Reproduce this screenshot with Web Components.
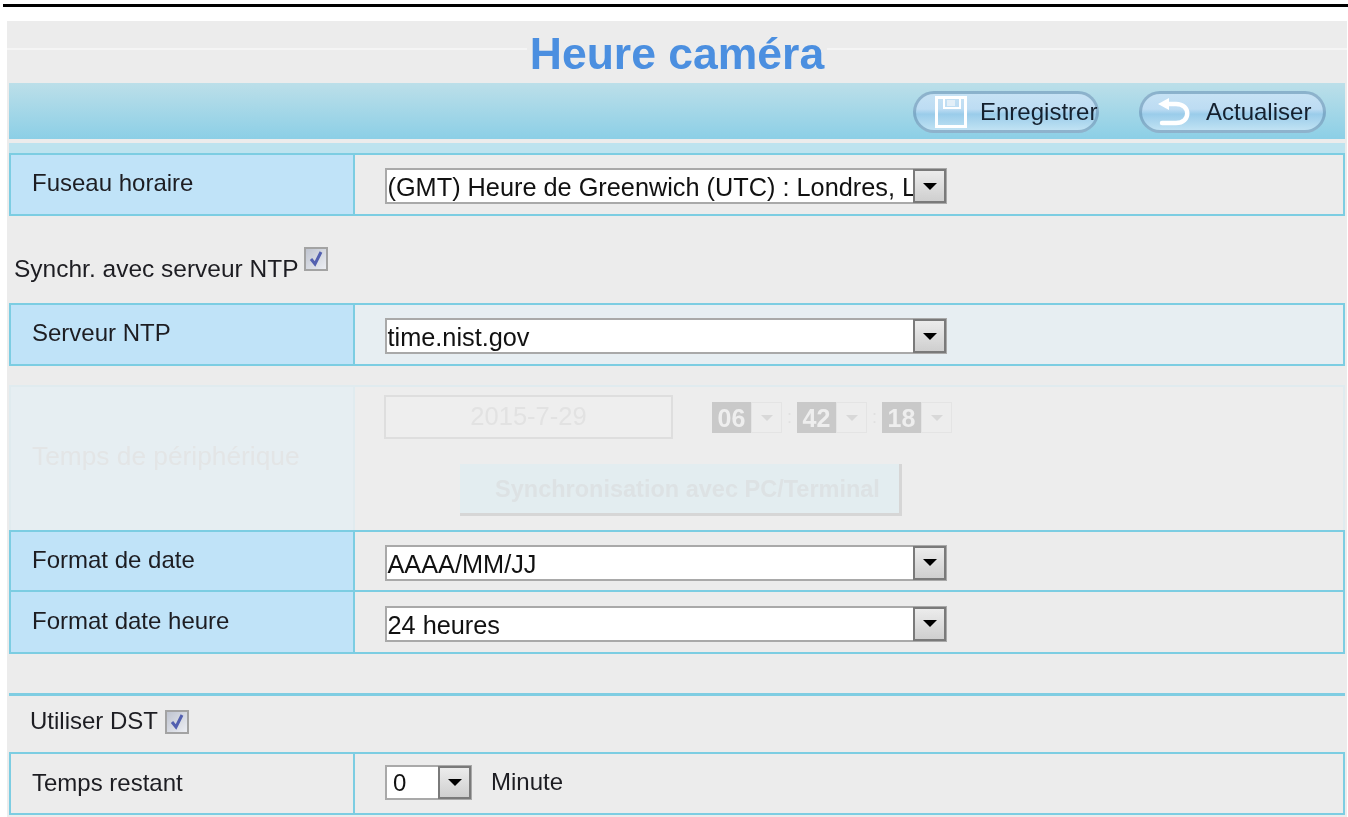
<!DOCTYPE html>
<html lang="fr"><head><meta charset="utf-8"><title>Heure caméra</title>
<style>
html,body{margin:0;padding:0;background:#fff;overflow:hidden;height:817px}
body{font-family:"Liberation Sans",Arial,sans-serif;color:#1d1d22}
</style></head><body>
<cam-page>
  <cam-title slot="head">Heure caméra</cam-title>
  <cam-toolbar slot="head">
    <cam-btn icon="save">Enregistrer</cam-btn>
    <cam-btn icon="back">Actualiser</cam-btn>
  </cam-toolbar>
  <cam-row label="Fuseau horaire" style="height:63px"><cam-select width="562">(GMT) Heure de Greenwich (UTC) : Londres, Lisbonne</cam-select></cam-row>
  <cam-check-line style="height:87px;padding:39px 0 0 5px;font-size:24.5px">Synchr. avec serveur NTP<cam-check style="margin:-8px 0 0 5px"></cam-check></cam-check-line>
  <cam-row label="Serveur NTP" tint style="height:63px"><cam-select width="562">time.nist.gov</cam-select></cam-row>
  <cam-time-row style="margin-top:19px"></cam-time-row>
  <cam-row label="Format de date" style="height:62px"><cam-select width="562">AAAA/MM/JJ</cam-select></cam-row>
  <cam-row label="Format date heure" style="height:62px;border-top:0"><cam-select width="562">24 heures</cam-select></cam-row>
  <cam-check-line style="margin-top:39px;border-top:3px solid #7fcde2;height:59px;padding:11px 0 0 21px;font-size:24px">Utiliser DST<cam-check style="margin:3px 0 0 7px"></cam-check></cam-check-line>
  <cam-row label="Temps restant" small style="height:63px"><cam-select width="87" small>0</cam-select><span style="margin-left:19px;font-size:24px;margin-top:-2px">Minute</span></cam-row>
</cam-page>
<script>
const def=(name,css,html)=>customElements.define(name,class extends HTMLElement{
  connectedCallback(){ if(this.shadowRoot) return;
    const r=this.attachShadow({mode:'open'});
    r.innerHTML='<style>'+css+'</style>'+(typeof html==='function'?html(this):html);
  }
});
def('cam-page',`
  :host{display:block}
  .bar{height:3px;background:#000;margin:4px 0 0 3px}
  .panel{margin:14px 1px 0 7px;background:#ececec;padding:0 2px;height:796px;box-sizing:border-box;filter:blur(.45px)}
`,`<div class="bar"></div><div class="panel"><slot name="head"></slot><slot></slot></div>`);
def('cam-title',`
  :host{display:flex;justify-content:center;height:62px;margin:0 -2px;
    background:linear-gradient(#f5f5f5,#f5f5f5) 0 27px/100% 2px no-repeat;
    font-size:44.5px;font-weight:700;color:#4b8fe0}
  span{background:#ececec;padding:0 3px;height:50px;margin-top:8px;line-height:50px}
`,`<span><slot></slot></span>`);
def('cam-toolbar',`
  :host{display:flex;justify-content:flex-end;gap:40px;box-sizing:border-box;height:56px;padding:8px 19px 0 0;
    background:linear-gradient(#bcdfe9,#8ccfe6);margin-bottom:14px;position:relative}
  :host::after{content:"";position:absolute;left:0;right:0;top:60px;height:10px;background:#bde3ef}
`,`<slot></slot>`);
def('cam-btn',`
  :host{display:flex;align-items:center;box-sizing:border-box;width:186px;height:42px;border-radius:21px;
    border:3px solid rgba(96,140,172,.55);background:linear-gradient(#c6e2f4 0,#bddcf3 42%,#9accea 56%,#c0e2f3 100%);
    font-size:24px;color:#14202e;white-space:nowrap}
  :host([icon=save]){padding-left:19px;--mr:13px}
  :host([icon=back]){width:187px;padding-left:16px;--mr:16px}
  svg{flex:none;margin-right:var(--mr)}
`,el=>el.getAttribute('icon')==='save'
 ?`<svg width="32" height="32" viewBox="0 0 32 32"><path d="M1.5 1.5H30.5V30.5H1.5Z" fill="none" stroke="#fff" stroke-width="3"/><path d="M9 1.5V12H25V1.5" fill="none" stroke="#fff" stroke-width="2"/><rect x="12" y="4" width="8" height="6" fill="#e3eff8"/></svg><slot></slot>`
 :`<svg width="32" height="30" viewBox="0 0 32 30"><path d="M10 7H18C33 7 33 26 18 26H4" fill="none" stroke="#fff" stroke-width="4.5" stroke-linecap="round"/><path d="M0 7L11 1V13Z" fill="#fff"/></svg><slot></slot>`);
def('cam-row',`
  :host{display:grid;grid-template-columns:344px 1fr;box-sizing:border-box;border:2px solid #7ccde2;font-size:24px}
  .l{background:#c0e3f8;border-right:2px solid #7ccde2;display:flex;align-items:center;padding:0 0 3px 21px;box-sizing:border-box}
  :host([small]) .l{background:#ececec;padding-bottom:1px}
  :host([tint]){background:#e7eef2}
  .c{display:flex;align-items:center;padding:3px 0 0 30px}
  :host([small]) .c{padding:0 0 2px 30px}
`,el=>`<div class="l">${el.getAttribute('label')}</div><div class="c"><slot></slot></div>`);
def('cam-select',`
  :host{display:flex;box-sizing:border-box;height:36px;background:#fff;border:2px solid #a9a9a9;font-size:25.3px;color:#111}
  .t{flex:1;min-width:0;overflow:hidden;white-space:nowrap;padding:0 0 0 .5px;line-height:34px}
  :host([small]){height:35px}
  :host([small]) .t{font-size:24px;padding-left:6px;line-height:31px}
  .b{width:33px;flex:none;box-sizing:border-box;border:2px solid #7a7a7a;background:linear-gradient(#ececec,#cfcfcf);display:flex;align-items:center;justify-content:center;margin:-1px -1px -1px 0}
  i{width:0;height:0;border:7px solid transparent;border-top:7px solid #000;border-bottom:0}
`,el=>{el.style.width=el.getAttribute('width')+'px';return `<div class="t"><slot></slot></div><div class="b"><i></i></div>`});
def('cam-check-line',`:host{display:block;box-sizing:border-box;line-height:28px}
 div{display:flex;align-items:flex-start}`,`<div><slot></slot></div>`);
def('cam-check',`
  :host{display:inline-block;width:24px;height:24px;box-sizing:border-box;border:2px solid #a3a3a3;background:linear-gradient(135deg,#bfc4d0,#eceef3)}
  svg{display:block}
`,`<svg width="20" height="20" viewBox="0 0 20 20"><path d="M5 10L9 15L15 3" fill="none" stroke="#5360b0" stroke-width="3"/></svg>`);
def('cam-time-row',`
  :host{display:grid;grid-template-columns:344px 1fr;box-sizing:border-box;height:145px;border:2px solid #e0ebef;border-bottom:0;color:#e3e5e6}
  .l{background:#e6eef2;border-right:2px solid #e0ebef;font-size:26.3px;display:flex;align-items:center;padding:0 0 4px 21px}
  .c{background:#ededed;padding:8px 0 0 29px}
  .top{display:flex;align-items:flex-start}
  .date{width:289px;height:44px;box-sizing:border-box;border:2px solid #dedede;font-size:25.5px;text-align:center;line-height:38px;background:#eeeeee;color:#e2e2e2}
  .tm{display:flex;align-items:center;margin:7px 0 0 39px;color:#e0e0e0;font-size:18px}
  .s{display:flex;height:31px;width:70px;box-sizing:border-box}
  .v{width:39px;background:#c9c9c9;color:#eee;font-weight:700;font-size:25px;line-height:32px;text-align:center}
  .a{flex:1;border:1px solid #e4e4e4;display:flex;align-items:center;justify-content:center}
  .a i{width:0;height:0;border:6px solid transparent;border-top:6px solid #d8d8d8;border-bottom:0}
  .sep{width:15px;text-align:center}
  .btn{margin:25px 0 0 76px;width:442px;height:52px;box-sizing:border-box;padding-left:16px;background:#e3edf0;border-right:3px solid #d6d6d6;border-bottom:3px solid #d6d6d6;text-align:center;color:#dde2e4;font-size:23.5px;font-weight:700;line-height:50px}
`,()=>{const s=v=>`<div class="s"><div class="v">${v}</div><div class="a"><i></i></div></div>`;
 return `<div class="l">Temps de périphérique</div><div class="c"><div class="top"><div class="date">2015-7-29</div><div class="tm">${s('06')}<span class="sep">:</span>${s('42')}<span class="sep">:</span>${s('18')}</div></div><div class="btn">Synchronisation avec PC/Terminal</div></div>`});
</script></body></html>
